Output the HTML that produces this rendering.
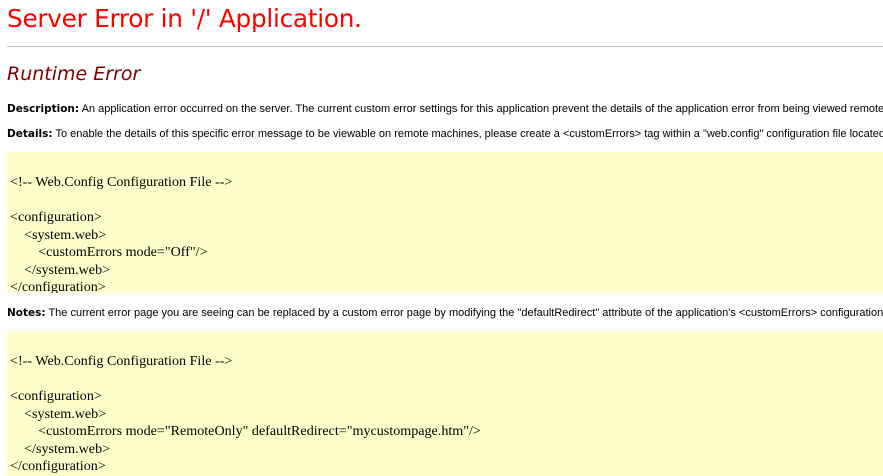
<!DOCTYPE html>
<html style="overflow:hidden"><head><style>
body{margin:0;width:883px;height:476px;overflow:hidden;background:#fff;font-family:"Liberation Sans",Arial,sans-serif;font-size:11px;color:#000;position:relative}
.a{position:absolute;white-space:nowrap;width:876px;overflow:hidden}
h1{position:absolute;left:7px;top:4px;margin:0;font:normal 24.8px "DejaVu Sans",Verdana,sans-serif;color:#f00;white-space:nowrap;letter-spacing:-0.3px}
hr{position:absolute;left:7px;top:46px;width:876px;margin:0;border:0;border-top:1px solid #c0c0c0;height:0}
h2{position:absolute;left:7px;top:63px;margin:0;font:italic normal 19px "DejaVu Sans",Verdana,sans-serif;color:#800000;white-space:nowrap}
b{font-family:"DejaVu Sans",Verdana,sans-serif;font-size:10.5px}
.box{position:absolute;left:7px;width:876px;background:#ffffcc;overflow:hidden}
pre{margin:0;position:absolute;left:3px;font:14.1px/17.5px "Liberation Serif","Times New Roman",serif;white-space:pre}
</style></head><body>
<h1>Server Error in '/' Application.</h1>
<hr>
<h2>Runtime Error</h2>
<div class="a" style="left:7px;top:103px"><b>Description:</b> An application error occurred on the server. The current custom error settings for this application prevent the details of the application error from being viewed remotely (for security reasons). It could, however, be viewed by browsers running on the local server machine.</div>
<div class="a" style="left:7px;top:128px"><b>Details:</b> To enable the details of this specific error message to be viewable on remote machines, please create a &lt;customErrors&gt; tag within a "web.config" configuration file located in the root directory of the current web application.</div>
<div class="box" style="top:152px;height:141px"><pre style="top:22px">&lt;!-- Web.Config Configuration File --&gt;

&lt;configuration&gt;
    &lt;system.web&gt;
        &lt;customErrors mode="Off"/&gt;
    &lt;/system.web&gt;
&lt;/configuration&gt;</pre></div>
<div class="a" style="left:7px;top:307px"><b>Notes:</b> The current error page you are seeing can be replaced by a custom error page by modifying the "defaultRedirect" attribute of the application's &lt;customErrors&gt; configuration tag to point to a custom error page URL.</div>
<div class="box" style="top:331px;height:145px"><pre style="top:22px">&lt;!-- Web.Config Configuration File --&gt;

&lt;configuration&gt;
    &lt;system.web&gt;
        &lt;customErrors mode="RemoteOnly" defaultRedirect="mycustompage.htm"/&gt;
    &lt;/system.web&gt;
&lt;/configuration&gt;</pre></div>
</body></html>
